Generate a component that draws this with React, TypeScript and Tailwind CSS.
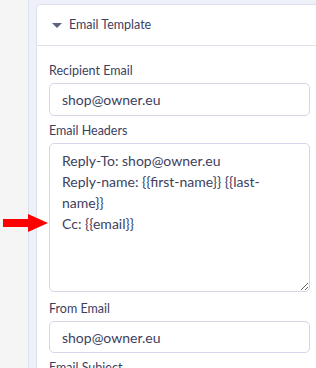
export default function App() {
  const fields = [
    { label: "Recipient Email", value: "shop@owner.eu" },
  ]

  return (
    <div className="relative flex h-[368px] w-[316px] overflow-hidden bg-[#f5f5f5] font-['Lato',sans-serif] text-[#3d4160]">
      <div className="w-[28px] shrink-0" />
      <div className="flex-1 border-l border-[#dde1ee] bg-[#eef1f9] pl-[7px] pt-[4px]">
        <div className="h-full rounded-tl-[5px] border-l border-t border-[#dde1ee] bg-white">
          <div className="flex h-[41px] items-center gap-[7px] border-b border-[#dde1ee] pl-[15px]">
            <svg width="10" height="5" viewBox="0 0 10 5">
              <path d="M0 0 L10 0 L5 5 Z" fill="#5d6384" />
            </svg>
            <span className="text-[12.5px]">Email Template</span>
          </div>

          <div className="flex flex-col pl-[12px] pr-[6px] pt-[16px]">
            {fields.map((f) => (
              <div key={f.label} className="flex flex-col">
                <label className="mb-[3px] text-[12.5px] leading-[18px]">{f.label}</label>
                <input
                  readOnly
                  value={f.value}
                  className="h-[33px] rounded-[5px] border border-[#d3d6ea] px-[12px] text-[14px] text-[#3d4160] outline-none"
                />
              </div>
            ))}

            <label className="mb-[3px] mt-[6px] text-[12.5px] leading-[18px]">Email Headers</label>
            <textarea
              readOnly
              defaultValue={"Reply-To: shop@owner.eu\nReply-name: {{first-name}} {{last-name}}\nCc: {{email}}"}
              className="h-[149px] rounded-[5px] border border-[#d3d6ea] px-[12px] pb-[6px] pt-[6px] text-[14px] leading-[21px] text-[#3d4160] outline-none"
            />

            <label className="mb-[3px] mt-[8px] text-[12.5px] leading-[18px]">From Email</label>
            <input
              readOnly
              value="shop@owner.eu"
              className="h-[32px] rounded-[5px] border border-[#d3d6ea] px-[12px] text-[14px] text-[#3d4160] outline-none"
            />

            <label className="mt-[6px] text-[12.5px] leading-[18px]">Email Subject</label>
          </div>
        </div>
      </div>

      <svg className="absolute left-[3px] top-[214px]" width="46" height="18" viewBox="0 0 46 18">
        <path d="M0 5 L25 5 L25 0 L45 9 L25 18 L25 13 L0 13 Z" fill="#f00" />
      </svg>
    </div>
  )
}
